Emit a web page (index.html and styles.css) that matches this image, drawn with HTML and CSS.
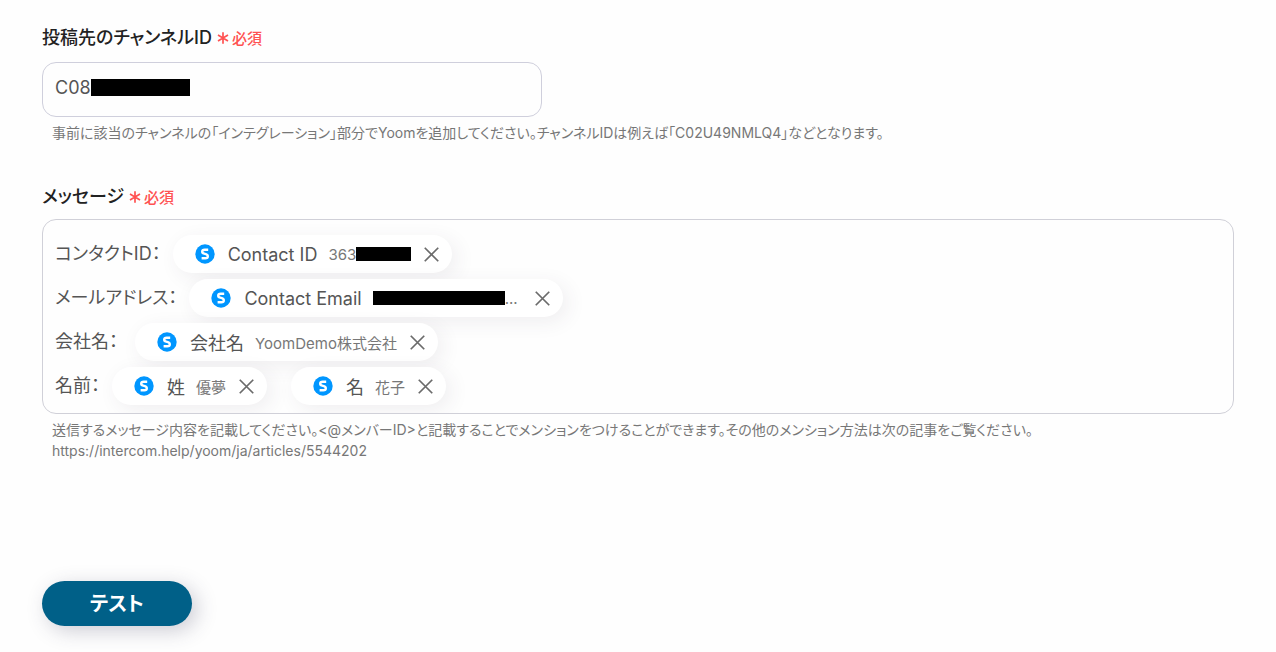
FILE: index.html
```html
<!DOCTYPE html>
<html lang="ja">
<head>
    <meta charset="UTF-8">
    <meta name="viewport" content="width=device-width, initial-scale=1.0">
    <title>テスト</title>
    <link rel="stylesheet" href="styles.css">
</head>
<body>
    <svg class="symbols" aria-hidden="true">
        <symbol id="app-icon" viewBox="0 0 20 20">
            <circle cx="10" cy="10" r="9.7" fill="#0096ff"/>
            <path d="M13.2 5.7H9.8C8.2 5.7 7.2 6.5 7.2 7.8S8.2 9.6 10 9.9 12.8 10.9 12.8 12.2 11.9 14.3 10.3 14.3H6.6" fill="none" stroke="#fff" stroke-width="2.4"/>
        </symbol>
        <symbol id="close-icon" viewBox="0 0 14 14">
            <path d="M.7.7l12.6 12.6M13.3.7L.7 13.3" fill="none" stroke="#6b6b6b" stroke-width="1.6"/>
        </symbol>
        <symbol id="required-icon" viewBox="0 0 12 12">
            <path d="M6 .2v11.6M1 3.1l10 5.8M11 3.1L1 8.9" fill="none" stroke="#ff5252" stroke-width="1.7"/>
        </symbol>
    </svg>

    <form class="form">
        <div class="field">
            <label class="label" for="channel">投稿先のチャンネルID <span class="required"><svg class="required-icon"><use href="#required-icon"/></svg>必須</span></label>
            <div class="input-wrap">
                <input class="input" type="text" id="channel" name="channel" value="C08">
                <span class="mask mask-channel"></span>
            </div>
            <p class="help">事前に該当のチャンネルの「インテグレーション」部分でYoomを追加してください。チャンネルIDは例えば「C02U49NMLQ4」などとなります。</p>
        </div>

        <div class="field">
            <div class="label" id="message-label">メッセージ <span class="required"><svg class="required-icon"><use href="#required-icon"/></svg>必須</span></div>
            <div class="editor" role="textbox" aria-multiline="true" aria-labelledby="message-label" contenteditable="true" spellcheck="false">
                <div class="line">
                    <span class="line-text">コンタクトID：</span>
                    <span class="chip" contenteditable="false">
                        <svg class="app-icon"><use href="#app-icon"/></svg>
                        <span class="chip-name">Contact ID</span>
                        <span class="chip-value">363<span class="mask mask-id"></span></span>
                        <button class="remove" type="button" aria-label="削除"><svg class="close-icon"><use href="#close-icon"/></svg></button>
                    </span>
                </div>
                <div class="line">
                    <span class="line-text">メールアドレス：</span>
                    <span class="chip" contenteditable="false">
                        <svg class="app-icon"><use href="#app-icon"/></svg>
                        <span class="chip-name">Contact Email</span>
                        <span class="chip-value"><span class="mask mask-email"></span>... </span>
                        <button class="remove" type="button" aria-label="削除"><svg class="close-icon"><use href="#close-icon"/></svg></button>
                    </span>
                </div>
                <div class="line">
                    <span class="line-text">会社名： </span>
                    <span class="chip" contenteditable="false">
                        <svg class="app-icon"><use href="#app-icon"/></svg>
                        <span class="chip-name">会社名</span>
                        <span class="chip-value">YoomDemo株式会社</span>
                        <button class="remove" type="button" aria-label="削除"><svg class="close-icon"><use href="#close-icon"/></svg></button>
                    </span>
                </div>
                <div class="line">
                    <span class="line-text">名前：</span>
                    <span class="chip" contenteditable="false">
                        <svg class="app-icon"><use href="#app-icon"/></svg>
                        <span class="chip-name">姓</span>
                        <span class="chip-value">優夢</span>
                        <button class="remove" type="button" aria-label="削除"><svg class="close-icon"><use href="#close-icon"/></svg></button>
                    </span>
                    <span class="chip" contenteditable="false">
                        <svg class="app-icon"><use href="#app-icon"/></svg>
                        <span class="chip-name">名</span>
                        <span class="chip-value">花子</span>
                        <button class="remove" type="button" aria-label="削除"><svg class="close-icon"><use href="#close-icon"/></svg></button>
                    </span>
                </div>
            </div>
            <p class="help">送信するメッセージ内容を記載してください。&lt;@メンバーID&gt;と記載することでメンションをつけることができます。その他のメンション方法は次の記事をご覧ください。<br>https://intercom.help/yoom/ja/articles/5544202</p>
        </div>

        <button class="submit" type="button">テスト</button>
    </form>
</body>
</html>
```
FILE: styles.css
```css
* {
    box-sizing: border-box;
}

body {
    margin: 0;
    background-color: #fefefe;
    color: #555;
    font-family: Inter, "Noto Sans CJK JP", sans-serif;
    font-feature-settings: "palt";
    font-size: 18px;
}

.symbols {
    display: none;
}

.form {
    padding: 24px 42px;
}

.field {
    margin-bottom: 40px;
}

.label {
    display: flex;
    align-items: center;
    gap: 5px;
    height: 24px;
    margin-bottom: 14px;
    color: #222;
    font-size: 18px;
    font-weight: 500;
}

.field + .field .label {
    margin-bottom: 12px;
}

.required {
    display: flex;
    align-items: center;
    gap: 3px;
    padding-top: 2px;
    color: #ff5252;
    font-size: 15px;
}

.required-icon {
    width: 12px;
    height: 12px;
    margin-top: 2px;
}

.input-wrap {
    position: relative;
    max-width: 500px;
}

.input {
    display: block;
    width: 100%;
    height: 55px;
    padding: 0 12px 4px;
    border: 1px solid #cfcfdc;
    border-radius: 14px;
    background-color: #fefefe;
    color: #555;
    font: inherit;
}

.mask {
    display: inline-block;
    background-color: #000;
}

.mask-channel {
    position: absolute;
    top: 17px;
    left: 49px;
    width: 99px;
    height: 17px;
}

.mask-id {
    width: 55px;
    height: 14px;
}

.mask-email {
    width: 132px;
    height: 14px;
}

.help {
    margin: 5px 10px 0;
    color: #777;
    font-size: 14px;
    line-height: 21px;
}

.editor {
    display: flex;
    flex-direction: column;
    gap: 6px;
    padding: 15px 12px 8px;
    border: 1px solid #d0d0d8;
    border-radius: 14px;
    background-color: #fefefe;
    overflow: hidden;
}

.line {
    display: flex;
    align-items: center;
    gap: 24px;
}

.line-text {
    margin-right: -12px;
    padding-bottom: 5px;
    white-space: pre;
}

.chip {
    display: flex;
    align-items: center;
    height: 38px;
    padding: 0 13px 0 22px;
    border-radius: 19px;
    background-color: #fff;
    box-shadow: 5px 5px 20px rgba(60, 50, 80, 0.08);
}

.app-icon {
    width: 20px;
    height: 20px;
    margin-right: 13px;
}

.chip-name {
    margin-right: 11px;
}

.chip-value {
    display: flex;
    align-items: center;
    color: #777;
    font-size: 15px;
    white-space: pre;
}

.remove {
    display: flex;
    margin-left: 13px;
    padding: 0;
    border: none;
    background: none;
    cursor: pointer;
}

.close-icon {
    width: 15px;
    height: 15px;
}

.submit {
    display: block;
    width: 150px;
    height: 45px;
    margin-top: 120px;
    padding: 0 0 3px;
    border: none;
    border-radius: 23px;
    background-color: #006088;
    box-shadow: 5px 5px 20px rgba(60, 60, 90, 0.25);
    color: #fff;
    font: inherit;
    font-size: 20px;
    font-weight: bold;
    cursor: pointer;
}
```
